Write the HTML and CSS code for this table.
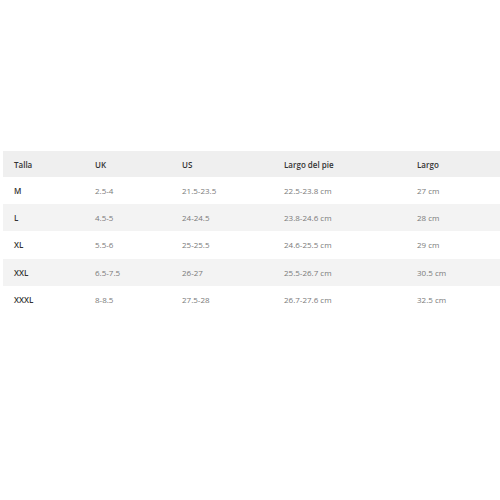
FILE: index.html
```html
<!DOCTYPE html>
<html lang="es">
<head>
<meta charset="utf-8">
<link rel="stylesheet" href="styles.css">
</head>
<body>
<div class="chart">
  <div class="row head">
    <div class="c c1">Talla</div><div class="c c2">UK</div><div class="c c3">US</div><div class="c c4">Largo del pie</div><div class="c c5">Largo</div>
  </div>
  <div class="row">
    <div class="c c1 size">M</div><div class="c c2">2.5-4</div><div class="c c3">21.5-23.5</div><div class="c c4">22.5-23.8 cm</div><div class="c c5">27 cm</div>
  </div>
  <div class="row alt">
    <div class="c c1 size">L</div><div class="c c2">4.5-5</div><div class="c c3">24-24.5</div><div class="c c4">23.8-24.6 cm</div><div class="c c5">28 cm</div>
  </div>
  <div class="row">
    <div class="c c1 size">XL</div><div class="c c2">5.5-6</div><div class="c c3">25-25.5</div><div class="c c4">24.6-25.5 cm</div><div class="c c5">29 cm</div>
  </div>
  <div class="row alt">
    <div class="c c1 size">XXL</div><div class="c c2">6.5-7.5</div><div class="c c3">26-27</div><div class="c c4">25.5-26.7 cm</div><div class="c c5">30.5 cm</div>
  </div>
  <div class="row">
    <div class="c c1 size">XXXL</div><div class="c c2">8-8.5</div><div class="c c3">27.5-28</div><div class="c c4">26.7-27.6 cm</div><div class="c c5">32.5 cm</div>
  </div>
</div>
</body>
</html>
```
FILE: styles.css
```css
html, body {
  margin: 0;
  padding: 0;
  background: #fff;
}
body {
  padding: 151px 0 0 3px;
  font-family: "Open Sans", "Liberation Sans", sans-serif;
  font-size: 8px;
  color: #7a7a7a;
}
.chart {
  display: flex;
  flex-direction: column;
}
.row {
  display: grid;
  grid-template-columns: 81px 87px 102px 133px 1fr;
  align-items: center;
  height: 27.2px;
  padding-left: 11px;
}
.row.head {
  height: 26px;
  background: #efefef;
  color: #333;
  font-weight: 600;
}
.row.alt {
  background: #f3f3f3;
}
.size {
  color: #333;
  font-weight: 600;
}
```
